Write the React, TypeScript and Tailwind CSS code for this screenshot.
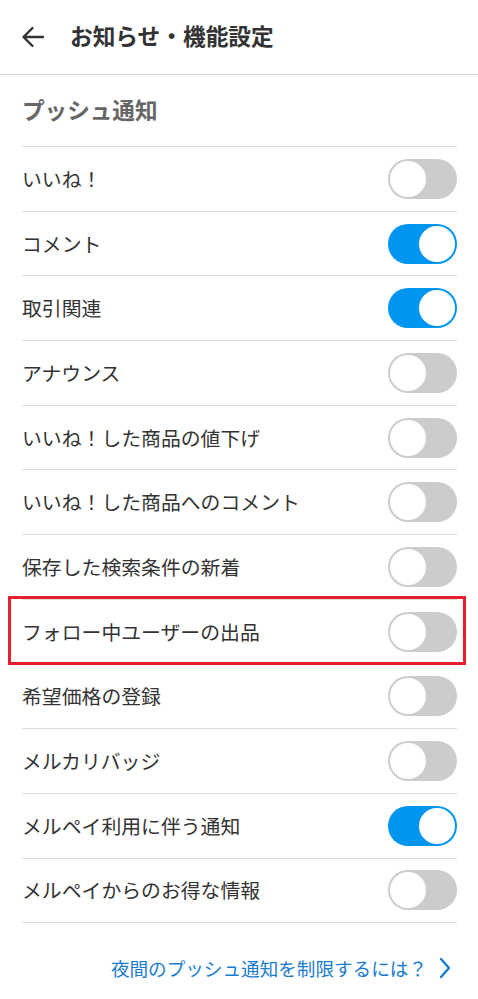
import React, { useState } from "react"

const items = [
  { label: "いいね！", on: false },
  { label: "コメント", on: true },
  { label: "取引関連", on: true },
  { label: "アナウンス", on: false },
  { label: "いいね！した商品の値下げ", on: false },
  { label: "いいね！した商品へのコメント", on: false },
  { label: "保存した検索条件の新着", on: false },
  { label: "フォロー中ユーザーの出品", on: false, highlight: true },
  { label: "希望価格の登録", on: false },
  { label: "メルカリバッジ", on: false },
  { label: "メルペイ利用に伴う通知", on: true },
  { label: "メルペイからのお得な情報", on: false },
]

function Toggle({ on, onClick }: { on: boolean; onClick: () => void }) {
  return (
    <button
      onClick={onClick}
      className={`relative w-[69px] h-[40px] rounded-full shrink-0 ${on ? "bg-[#0095ee]" : "bg-[#cccccc]"}`}
    >
      <span
        className={`absolute top-[2px] w-[36px] h-[36px] rounded-full bg-white ${
          on ? "right-[2px]" : "left-[2px]"
        }`}
      />
    </button>
  )
}

export default function App() {
  const [state, setState] = useState(items.map((i) => i.on))

  const toggle = (i: number) => {
    setState((prev) => prev.map((v, idx) => (idx === i ? !v : v)))
  }

  return (
    <div
      className="bg-white min-h-screen w-[478px] text-[#333333]"
      style={{ fontFamily: '"Noto Sans CJK JP", "Noto Sans", sans-serif' }}
    >
      <header className="h-[75px] flex items-center border-b border-[#d6d6d6]">
        <div className="pl-[21px] w-[70px] flex items-center">
          <svg width="24" height="22" viewBox="0 0 24 22" fill="none">
            <path d="M22 11H3M11.5 2L2.5 11l9 9" stroke="#333" strokeWidth="2.4" strokeLinecap="round" strokeLinejoin="round" />
          </svg>
        </div>
        <h1 className="text-[22.7px] font-bold leading-none text-[#333333] -mt-[2px]">お知らせ・機能設定</h1>
      </header>

      <div className="px-[22px] pr-[21px]">
        <div className="h-[72px] flex items-center border-b border-[#dddddd]">
          <h2 className="text-[22.6px] font-bold text-[#666666] -mt-[2px]">プッシュ通知</h2>
        </div>

        {items.map((item, i) => (
          <div key={i} className="relative h-[64.7px] flex items-center justify-between border-b border-[#dddddd]">
            <span className="text-[19.85px] leading-none">{item.label}</span>
            <Toggle on={state[i]} onClick={() => toggle(i)} />
            {item.highlight && (
              <div className="absolute left-[-14px] right-[-9px] top-[-4px] bottom-[-1px] border-[3px] border-[#e8202e] pointer-events-none" />
            )}
          </div>
        ))}

        <div className="h-[90px] flex items-center justify-end pr-[6px]">
          <a className="flex items-center gap-[12px] text-[18.6px] text-[#1a7ccf]">
            <span>夜間のプッシュ通知を制限するには？</span>
            <svg width="12" height="22" viewBox="0 0 12 22" fill="none">
              <path d="M2 2l8 9-8 9" stroke="#1a7ccf" strokeWidth="2.4" strokeLinecap="round" strokeLinejoin="round" />
            </svg>
          </a>
        </div>
      </div>
    </div>
  )
}
